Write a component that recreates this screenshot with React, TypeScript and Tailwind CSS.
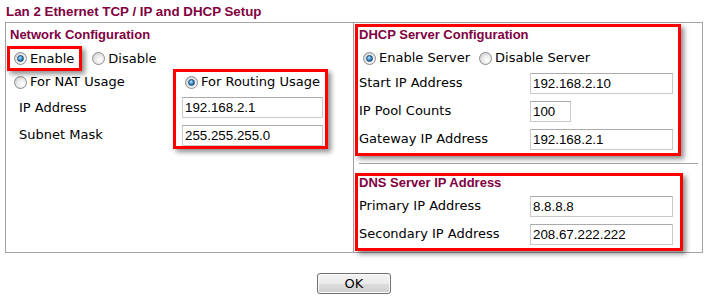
import React from "react";

function Radio({ checked }: { checked?: boolean }) {
  return (
    <span className="inline-flex items-center justify-center w-[13px] h-[13px] rounded-full border border-[#8c8c8c] bg-[radial-gradient(circle_at_65%_65%,#ffffff_0%,#ebebeb_45%,#c4c4c4_100%)] shrink-0">
      {checked && (
        <span className="block w-[7px] h-[7px] rounded-full border border-[#1c4a73] bg-[radial-gradient(circle_at_40%_35%,#c4ebff_0%,#3d93d6_45%,#0f3f6c_100%)]" />
      )}
    </span>
  );
}

function TextBox({ value, w }: { value: string; w: string }) {
  return (
    <input
      readOnly
      value={value}
      className={`${w} h-[21px] border border-[#cacaca] border-t-[#ababab] pl-[2px] text-[13.33px] leading-[19px] text-black font-['Liberation_Sans',Arial,sans-serif] outline-none bg-white`}
    />
  );
}

const redBox =
  "absolute border-[3px] border-[#ff0000] shadow-[3px_3px_5px_rgba(0,0,0,0.45)] pointer-events-none";

export default function App() {
  return (
    <div className="relative w-[710px] h-[302px] bg-white font-['DejaVu_Sans',sans-serif] text-[13px] text-black">
      <div className="h-[22px] pt-[2px] pl-[6px] leading-[20px] font-['Liberation_Sans',Arial,sans-serif] font-bold text-[13.33px] text-[#800040]">
        Lan 2 Ethernet TCP / IP and DHCP Setup
      </div>
      <div className="ml-[5px] w-[698px]">
        <div className="flex h-[231px] border border-[#a3a3a3]">
          {/* Left cell */}
          <div className="w-[348px] border-r border-[#a3a3a3] pt-[4px]">
            <div className="pl-[4px] h-[16px] leading-[16px] font-['Liberation_Sans',Arial,sans-serif] font-bold text-[13px] text-[#800040]">
              Network Configuration
            </div>
            <div className="mt-[4px] h-[23px] flex items-center">
              <span className="ml-[8px] flex">
                <Radio checked />
              </span>
              <span className="ml-[3px]">Enable</span>
              <span className="ml-[18px] flex">
                <Radio />
              </span>
              <span className="ml-[3px]">Disable</span>
            </div>
            <div className="grid grid-cols-[176px_1fr]">
              <div className="h-[24px] flex items-center">
                <span className="ml-[8px] flex">
                  <Radio />
                </span>
                <span className="ml-[3px]">For NAT Usage</span>
              </div>
              <div className="h-[24px] flex items-center">
                <span className="ml-[3px] flex">
                  <Radio checked />
                </span>
                <span className="ml-[3px]">For Routing Usage</span>
              </div>
              <div className="h-[27px] flex items-center pl-[13px]">IP Address</div>
              <div className="h-[27px] flex items-center">
                <TextBox value="192.168.2.1" w="w-[141px]" />
              </div>
              <div className="h-[28px] flex items-center pl-[13px]">Subnet Mask</div>
              <div className="h-[28px] flex items-center">
                <TextBox value="255.255.255.0" w="w-[141px]" />
              </div>
            </div>
          </div>
          {/* Right cell */}
          <div className="flex-1 pt-[4px] pl-[5px] pr-[4px]">
            <div className="h-[16px] leading-[16px] font-['Liberation_Sans',Arial,sans-serif] font-bold text-[13px] text-[#800040]">
              DHCP Server Configuration
            </div>
            <div className="mt-[4px] h-[22px] flex items-center">
              <span className="ml-[4px] flex">
                <Radio checked />
              </span>
              <span className="ml-[3px]">Enable Server</span>
              <span className="ml-[9px] flex">
                <Radio />
              </span>
              <span className="ml-[3px]">Disable Server</span>
            </div>
            <div className="grid grid-cols-[171px_1fr]">
              <div className="h-[28px] flex items-center">Start IP Address</div>
              <div className="h-[28px] flex items-center">
                <TextBox value="192.168.2.10" w="w-[143px]" />
              </div>
              <div className="h-[28px] flex items-center">IP Pool Counts</div>
              <div className="h-[28px] flex items-center">
                <TextBox value="100" w="w-[41px]" />
              </div>
              <div className="h-[28px] flex items-center">Gateway IP Address</div>
              <div className="h-[28px] flex items-center">
                <TextBox value="192.168.2.1" w="w-[143px]" />
              </div>
            </div>
            <div className="mt-[10px] h-px bg-[#a3a3a3]" />
            <div className="mt-[11px] h-[16px] leading-[16px] font-['Liberation_Sans',Arial,sans-serif] font-bold text-[13px] text-[#800040]">
              DNS Server IP Address
            </div>
            <div className="mt-[1px] grid grid-cols-[171px_1fr]">
              <div className="h-[28px] flex items-center">Primary IP Address</div>
              <div className="h-[28px] flex items-center">
                <TextBox value="8.8.8.8" w="w-[143px]" />
              </div>
              <div className="h-[28px] flex items-center">Secondary IP Address</div>
              <div className="h-[28px] flex items-center">
                <TextBox value="208.67.222.222" w="w-[143px]" />
              </div>
            </div>
          </div>
        </div>
        <div className="mt-[20px] flex justify-center">
          <button className="w-[74px] h-[21px] rounded-[3px] border border-[#707070] bg-[linear-gradient(to_bottom,#f2f2f2_0%,#ebebeb_50%,#dddddd_50%,#cfcfcf_100%)] shadow-[inset_0_0_0_1px_#fbfbfb] text-[13px] leading-[19px] text-black font-['DejaVu_Sans',sans-serif]">
            OK
          </button>
        </div>
      </div>

      {/* Annotation boxes */}
      <div className={`${redBox} left-[7px] top-[46px] w-[75px] h-[25px]`} />
      <div className={`${redBox} left-[173px] top-[69px] w-[155px] h-[80px]`} />
      <div className={`${redBox} left-[355px] top-[24px] w-[326px] h-[132px]`} />
      <div className={`${redBox} left-[355px] top-[173px] w-[328px] h-[78px]`} />
    </div>
  );
}
